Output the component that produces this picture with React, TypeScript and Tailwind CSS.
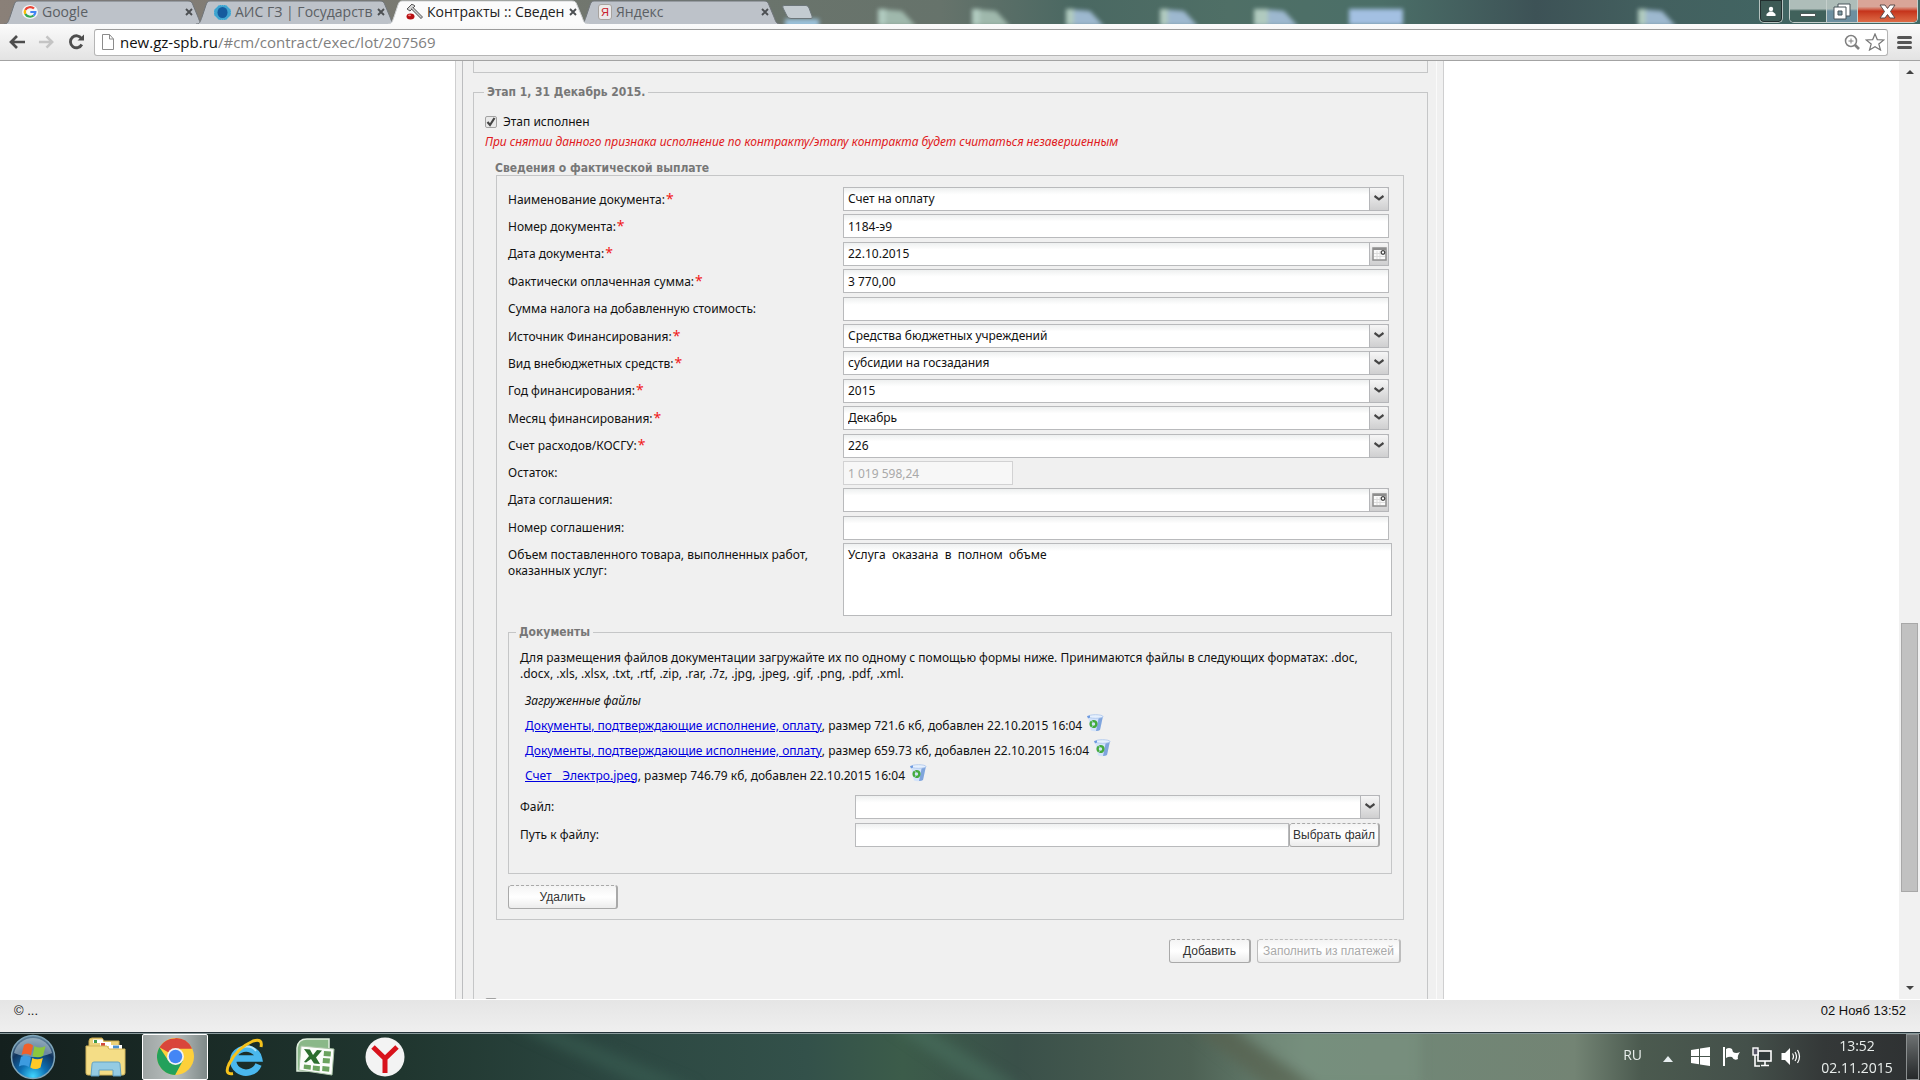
import React, { useId } from "react";

const UI = "font-['Noto_Sans',sans-serif]";
const HEADING = "font-['DejaVu_Sans_Condensed','DejaVu_Sans',sans-serif] text-[12px] font-bold text-[#777]";
const FIELD =
  "h-6 w-full border border-[#b9babc] bg-linear-to-b from-[#eef0f0] via-white via-30% to-white px-1 text-[12px] text-[#111] outline-none";

type TabProps = { title: string; icon: React.ReactNode; active?: boolean };

function Tab({ title, icon, active }: TabProps) {
  return (
    <div className="relative flex h-6 w-48 shrink-0 items-center pr-[5px] pl-3.5">
      <svg
        className={active ? "absolute inset-0 z-10 h-full w-full overflow-visible" : "absolute inset-0 h-full w-full overflow-visible"}
        viewBox="0 0 192 24"
        preserveAspectRatio="none"
        aria-hidden="true"
      >
        <path
          d="M-4 24 C0 24 0 22 2 17 L6 5 C7 2 8 1 10 1 L180 1 C183 1 184 2 185 5 L190 17 C192 22 192 24 197 24"
          fill={active ? "#fbfbfb" : "#bdc2c9"}
          stroke={active ? "#cfd2d4" : "#70757a"}
        />
      </svg>
      <button type="button" className="relative z-10 flex min-w-0 flex-1 items-center gap-1 text-left">
        {icon}
        <span className={active ? "text-[14px] leading-5 whitespace-nowrap text-[#222]" : "text-[14px] leading-5 whitespace-nowrap text-[#5b5f64]"}>
          {title}
        </span>
      </button>
      <button type="button" aria-label="Закрыть вкладку" className="relative z-10 flex w-3 justify-center">
        <svg width="8" height="8" viewBox="0 0 8 8" aria-hidden="true">
          <path d="M1 1 L7 7 M7 1 L1 7" stroke="#4c4f52" strokeWidth="1.9" />
        </svg>
      </button>
    </div>
  );
}

const GoogleIcon = () => (
  <svg className="shrink-0" width="16" height="14" viewBox="0 0 48 48" preserveAspectRatio="none" aria-hidden="true">
    <circle cx="24" cy="24" r="24" fill="#f4f5f6" />
    <path d="M36 12 A16 16 0 0 0 10 17" fill="none" stroke="#ea4335" strokeWidth="7" />
    <path d="M10 17 A16 16 0 0 0 10 31" fill="none" stroke="#fbbc05" strokeWidth="7" />
    <path d="M10 31 A16 16 0 0 0 35 36" fill="none" stroke="#34a853" strokeWidth="7" />
    <path d="M35 36 A16 16 0 0 0 40 24 H25" fill="none" stroke="#4285f4" strokeWidth="7" />
  </svg>
);

const GearIcon = () => (
  <svg className="shrink-0" width="17" height="15" viewBox="0 0 17 15" aria-hidden="true">
    <path d="M5 0 L12 0 L17 5 L17 10 L12 15 L5 15 L0 10 L0 5 Z" fill="#3fa4cf" strokeDasharray="1 1" stroke="#79bfe0" />
    <ellipse cx="8.5" cy="7.5" rx="5" ry="5.5" fill="#155b9e" />
  </svg>
);

const GavelIcon = () => (
  <svg className="shrink-0" width="17" height="16" viewBox="0 0 17 16" aria-hidden="true">
    <path d="M1 5 L6 0 L9 2 L4 7 Z" fill="#d4d4d4" stroke="#555" />
    <path d="M6 4 L16 14" stroke="#555" strokeWidth="3" />
    <path d="M6 4 L15.500 13.500" stroke="#cfcfcf" strokeWidth="1.400" />
    <ellipse cx="4.500" cy="12.500" rx="4" ry="3" fill="#b80f12" />
    <ellipse cx="3.500" cy="11.300" rx="1.500" ry="0.900" fill="#ef8a86" />
  </svg>
);

const YandexIcon = () => (
  <span className="flex h-4 w-3.5 shrink-0 items-center justify-center rounded-[3px] border border-[#a7a39f] bg-[#eceaea] font-['Liberation_Sans',sans-serif] text-[11px] text-[#c8202a]">
    Я
  </span>
);

function Header() {
  return (
    <header className="shrink-0 font-['Open_Sans',sans-serif]">
      <div className="relative flex h-6 overflow-hidden">
        <svg className="absolute inset-0 h-full w-full" viewBox="0 0 1920 24" preserveAspectRatio="none" aria-hidden="true">
          <defs>
            <linearGradient id="glass" x1="0" x2="1">
              <stop offset="0" stopColor="#8a8078" />
              <stop offset="0.380" stopColor="#6b746c" />
              <stop offset="0.490" stopColor="#66736b" />
              <stop offset="0.560" stopColor="#4a6862" />
              <stop offset="0.640" stopColor="#4f6f66" />
              <stop offset="0.720" stopColor="#4b6f68" />
              <stop offset="0.800" stopColor="#3d5256" />
              <stop offset="0.860" stopColor="#43605f" />
              <stop offset="1" stopColor="#3f6a66" />
            </linearGradient>
          </defs>
          <rect width="1920" height="24" fill="url(#glass)" />
          <g className="blur-[2px]">
            {[818, 912, 1006, 1100, 1194, 1288, 1638].map((x, i) => (
              <g key={x} transform={i < 5 ? "translate(60 0)" : i === 5 ? "translate(-28 0)" : undefined}>
                <path d={`M${x} 9 L${x + 24} 11 L${x + 38} 26 L${x} 26Z`} fill={i < 2 ? "#9fb8ac" : "#9db8cf"} />
                <rect x={x} y="9" width="8" height="16" fill="#b0cabf" />
              </g>
            ))}
            <rect x="1349" y="9" width="54" height="16" fill="#a3c0e2" />
            <rect x="785" y="19" width="34" height="8" fill="#9cc3dd" />
          </g>
        </svg>
        <div className="relative flex w-full pl-2">
          <Tab title="Google" icon={<GoogleIcon />} />
          <Tab title="АИС ГЗ | Государств" icon={<GearIcon />} />
          <Tab title="Контракты :: Сведен" icon={<GavelIcon />} active />
          <Tab title="Яндекс" icon={<YandexIcon />} />
          <button type="button" aria-label="Новая вкладка" className="ml-1.5 flex items-center">
            <svg width="32" height="16" viewBox="0 0 32 16" aria-hidden="true">
              <path d="M2 1.500 H24 Q26 1.500 27 4 L30 12 Q31 14.500 29 14.500 H9 Q6 14.500 5 12 L1 4 Q0 1.500 2 1.500Z" fill="#c3cbd0" stroke="#6c7679" />
            </svg>
          </button>
          <div className="ml-auto flex items-start pr-0.5">
            <button type="button" aria-label="Профиль" className="mr-1.5 flex h-[23px] w-6 items-center justify-center rounded-b-[5px] border border-t-0 border-[#b5c2bf] bg-[#3d5a55] shadow-[inset_0_0_0_1px_#222e2e]">
              <svg width="10" height="11" viewBox="0 0 10 11" fill="#fff" aria-hidden="true">
                <circle cx="5" cy="3" r="2.200" />
                <path d="M0.500 10 V8 L3.500 5.500 H6.500 L9.500 8 V10Z" />
              </svg>
            </button>
            <div className="flex h-[23px] overflow-hidden rounded-b-[5px] border border-t-0 border-[#c5cfcc] shadow-[inset_0_0_0_1px_#222e2e]">
              <button type="button" aria-label="Свернуть" className="flex w-9 items-center justify-center bg-linear-to-b from-[#aebdb9] from-40% to-[#40615b] to-50%">
                <span className="mt-2 h-1 w-4 border border-[#4d5a58] bg-white" />
              </button>
              <button type="button" aria-label="Восстановить" className="flex w-8 items-center justify-center border-x border-[#c5cfcc] bg-linear-to-b from-[#aebdb9] from-40% to-[#6c8fa0] to-50%">
                <svg width="18" height="17" viewBox="0 0 18 17" aria-hidden="true">
                  <path d="M5 1 H17 V13 H5Z" fill="#fff" stroke="#48545a" />
                  <path d="M1 4 H13 V16 H1Z" fill="#fff" stroke="#48545a" />
                  <path d="M5 8 H9 V12 H5Z" fill="#7f9ba6" stroke="#48545a" />
                </svg>
              </button>
              <button type="button" aria-label="Закрыть" className="flex w-[59px] items-center justify-center bg-linear-to-b from-[#d9a598] from-30% via-[#c5321a] via-50% to-[#dd6a45]">
                <svg width="17" height="15" viewBox="0 0 17 15" aria-hidden="true">
                  <path d="M1 1 H6 L8.500 4.500 L11 1 H16 L11.500 7.500 L16 14 H11 L8.500 10.500 L6 14 H1 L5.500 7.500Z" fill="#fff" stroke="#5b4a4a" />
                </svg>
              </button>
            </div>
          </div>
        </div>
      </div>
      <div className="flex h-[37px] items-center border-b border-[#a3a3a3] bg-linear-to-b from-[#fbfbfb] to-[#e3e3e3] pr-2 pl-2">
        <button type="button" aria-label="Назад" className="flex w-[30px] items-center">
          <svg width="18" height="14" viewBox="0 0 18 14" fill="none" stroke="#4d4d4d" strokeWidth="2.700" aria-hidden="true">
            <path d="M17 7 H3 M9 1 L3 7 L9 13" />
          </svg>
        </button>
        <button type="button" aria-label="Вперёд" className="flex w-[30px] items-center">
          <svg width="17" height="14" viewBox="0 0 18 14" fill="none" stroke="#c4c4c4" strokeWidth="2.700" aria-hidden="true">
            <path d="M1 7 H15 M9 1 L15 7 L9 13" />
          </svg>
        </button>
        <button type="button" aria-label="Обновить" className="flex w-[26px] items-center">
          <svg width="17" height="16" viewBox="0 0 17 16" aria-hidden="true">
            <path d="M13.500 4.500 A6 6 0 1 0 13.800 10.500" fill="none" stroke="#4d4d4d" strokeWidth="2.800" />
            <path d="M9.500 6.500 H16 V0.500Z" fill="#4d4d4d" />
          </svg>
        </button>
        <div className="flex h-[27px] min-w-0 flex-1 items-center rounded-[3px] border border-[#b5b5b5] border-t-[#9c9c9c] bg-white pr-0.5 pl-1.5">
          <svg className="shrink-0" width="14" height="16" viewBox="0 0 14 16" aria-hidden="true">
            <path d="M1.500 0.500 H8.500 L12.500 5 V15.500 H1.500Z M8.500 0.500 V5 H12.500" fill="#fff" stroke="#8b8b8b" />
          </svg>
          <a href="#cm/contract/exec/lot/207569" className="ml-[5px] flex-1 text-[15px] leading-5 text-[#808080]">
            <span className="text-[#111]">new.gz-spb.ru</span>/#cm/contract/exec/lot/207569
          </a>
          <svg className="shrink-0" width="17" height="16" viewBox="0 0 17 16" fill="none" stroke="#808080" aria-hidden="true">
            <circle cx="7" cy="7" r="5.500" strokeWidth="1.500" />
            <path d="M4.500 7 H9.500 M7 4.500 V9.500" />
            <path d="M11 11 L15 15" strokeWidth="2.600" />
          </svg>
          <svg className="ml-1 shrink-0" width="20" height="18" viewBox="0 0 20 18" aria-hidden="true">
            <path d="M10 1 L12.300 6.600 L18.800 7 L13.800 11 L15.500 17 L10 13.700 L4.500 17 L6.200 11 L1.200 7 L7.700 6.600Z" fill="#fff" stroke="#777" strokeWidth="1.200" />
          </svg>
        </div>
        <button type="button" aria-label="Меню" className="ml-[9px] flex w-[15px] flex-col gap-0.5">
          <span className="h-[3px] w-full rounded-xs bg-[#555]" />
          <span className="h-[3px] w-full rounded-xs bg-[#555]" />
          <span className="h-[3px] w-full rounded-xs bg-[#555]" />
        </button>
      </div>
    </header>
  );
}

function Trigger({ kind }: { kind: "select" | "date" }) {
  return (
    <span className="pointer-events-none absolute top-0 right-0 flex h-6 w-5 items-center justify-center rounded-tr-xs border border-[#b5b6b9] bg-linear-to-b from-[#f6f6f6] to-[#cfcfd0]">
      {kind === "select" ? (
        <svg className="mb-0.5" width="10" height="6" viewBox="0 0 10 6" fill="none" aria-hidden="true">
          <path d="M0.500 1 L5 4.300 L9.500 1" stroke="#454545" strokeWidth="2.200" />
        </svg>
      ) : (
        <svg width="15" height="14" viewBox="0 0 15 14" aria-hidden="true">
          <rect x="1" y="1" width="13" height="12" fill="#fafafa" stroke="#8d8d8d" strokeWidth="1.500" />
          <path d="M1 2 H14" stroke="#8d8d8d" strokeWidth="2" />
          <path d="M2 6.500 H13 M2 9.500 H13 M5 4 V12 M8 4 V12" stroke="#dcdcdc" />
          <circle cx="11" cy="5.500" r="1.800" fill="#fff" stroke="#444" strokeWidth="1.300" />
        </svg>
      )}
    </span>
  );
}

type RowData = {
  label: string;
  required?: boolean;
  kind?: "text" | "select" | "date" | "disabled";
  value?: string;
};

const rows: RowData[] = [
  { label: "Наименование документа:", required: true, kind: "select", value: "Счет на оплату" },
  { label: "Номер документа:", required: true, value: "1184-э9" },
  { label: "Дата документа:", required: true, kind: "date", value: "22.10.2015" },
  { label: "Фактически оплаченная сумма:", required: true, value: "3 770,00" },
  { label: "Сумма налога на добавленную стоимость:" },
  { label: "Источник Финансирования:", required: true, kind: "select", value: "Средства бюджетных учреждений" },
  { label: "Вид внебюджетных средств:", required: true, kind: "select", value: "субсидии на госзадания" },
  { label: "Год финансирования:", required: true, kind: "select", value: "2015" },
  { label: "Месяц финансирования:", required: true, kind: "select", value: "Декабрь" },
  { label: "Счет расходов/КОСГУ:", required: true, kind: "select", value: "226" },
  { label: "Остаток:", kind: "disabled", value: "1 019 598,24" },
  { label: "Дата соглашения:", kind: "date" },
  { label: "Номер соглашения:" },
];

function Row({ label, required, kind = "text", value = "" }: RowData) {
  const id = useId();
  return (
    <div className="flex h-6 items-center">
      <label htmlFor={id} className="w-[335px] shrink-0 leading-4">
        {label}
        {required && <span className="ml-px text-[14px] leading-4 text-[#f01818]">*</span>}
      </label>
      <div className="relative flex-1">
        {kind === "select" && (
          <select id={id} defaultValue={value} className={`${FIELD} block appearance-none`}>
            <option>{value}</option>
          </select>
        )}
        {(kind === "text" || kind === "date") && <input id={id} type="text" defaultValue={value} className={`${FIELD} block`} />}
        {kind === "disabled" && (
          <input
            id={id}
            type="text"
            disabled
            defaultValue={value}
            className="block h-6 w-[170px] border border-[#d2d2d3] bg-[#f7f7f7] px-1 text-[12px] text-[#a9a9a9]"
          />
        )}
        {(kind === "select" || kind === "date") && <Trigger kind={kind} />}
      </div>
    </div>
  );
}

function Push({ children, className, disabled }: { children: React.ReactNode; className: string; disabled?: boolean }) {
  return (
    <button
      type="button"
      disabled={disabled}
      className={`${className} h-6 shrink-0 rounded-[3px] border border-r-2 border-[#a9a9a9] bg-linear-to-b from-[#f4f4f4] via-white to-[#ececec] font-['Liberation_Sans',sans-serif] text-[12px] whitespace-nowrap text-[#333] [border-top-style:dashed] disabled:border-[#bdbdbd] disabled:text-[#a9a9a9]`}
    >
      {children}
    </button>
  );
}

const TrashIcon = () => (
  <svg width="18" height="18" viewBox="0 0 18 18" aria-hidden="true">
    <path d="M2 2.500 L17 2 L14 16 Q10 18 5 16.500Z" fill="#d3e3fa" />
    <path d="M13 2.200 L17 2 L14 16 Q12 17.200 10 17Z" fill="#7fa4dc" />
    <ellipse cx="9.500" cy="2.500" rx="7.500" ry="1.800" fill="#e6f0fd" stroke="#a9c4ec" strokeWidth="0.800" />
    <path d="M1 2 L4 1.500 L4 3.500 L2 4.500Z" fill="#6f9be0" />
    <circle cx="7.500" cy="10" r="2.900" fill="none" stroke="#43ab3c" strokeWidth="2.400" strokeDasharray="5.500 0.600" />
  </svg>
);

const files = [
  { name: "Документы, подтверждающие исполнение, оплату", size: "721.6" },
  { name: "Документы, подтверждающие исполнение, оплату", size: "659.73" },
  { name: "Счет__Электро.jpeg", size: "746.79" },
];

function Documents() {
  return (
    <fieldset className="mt-2 min-w-0 border border-[#c5c6c7] pr-[11px] pb-[26px] pl-[11px]">
      <legend className={`${HEADING} -ml-1 px-[3px] leading-4`}>Документы</legend>
      <p className="mt-2.5 leading-4">
        Для размещения файлов документации загружайте их по одному с помощью формы ниже. Принимаются файлы в следующих форматах: .doc, .docx,
        .xls, .xlsx, .txt, .rtf, .zip, .rar, .7z, .jpg, .jpeg, .gif, .png, .pdf, .xml.
      </p>
      <div className="mt-[11px] pl-[5px]">
        <h4 className="mb-1 leading-4 italic">Загруженные файлы</h4>
        <ul>
          {files.map((f) => (
            <li key={f.size} className="flex h-[25px] items-center whitespace-pre">
              <a href="#file" className="text-[#0000e0] underline">
                {f.name}
              </a>
              , размер {f.size} кб, добавлен 22.10.2015 16:04
              <button type="button" aria-label="Удалить файл" className="mb-1.5 ml-1">
                <TrashIcon />
              </button>
            </li>
          ))}
        </ul>
      </div>
      <div className="mt-[7px]">
        <Row label="Файл:" kind="select" />
      </div>
      <div className="mt-1 flex h-6 items-center">
        <label htmlFor="path" className="w-[335px] shrink-0">
          Путь к файлу:
        </label>
        <input id="path" type="text" className={`${FIELD} min-w-0 flex-1`} />
        <Push className="w-[91px]">Выбрать файл</Push>
      </div>
    </fieldset>
  );
}

function Payment() {
  return (
    <section className="mr-[23px] ml-[22px]">
      <h3 className={`${HEADING} -ml-px leading-[13px]`}>Сведения о фактической выплате</h3>
      <div className="border border-[#c5c6c7] pt-[11px] pr-[11px] pb-2.5 pl-[11px]">
        <div className="mr-[3px] flex h-[353px] flex-col justify-between">
          {rows.map((r) => (
            <Row key={r.label} {...r} />
          ))}
        </div>
        <div className="mt-[3px] flex">
          <label htmlFor="volume" className="w-[335px] shrink-0 pt-1 leading-4">
            Объем поставленного товара, выполненных работ,
            <br />
            оказанных услуг:
          </label>
          <textarea
            id="volume"
            defaultValue="Услуга  оказана  в  полном  объме"
            className="h-[73px] flex-1 resize-none border border-[#b9babc] bg-linear-to-b from-[#eef0f0] via-white via-10% to-white px-1 py-[3px] text-[12px] leading-4 outline-none"
          />
        </div>
        <Documents />
        <Push className="mt-[11px] w-[110px]">Удалить</Push>
      </div>
    </section>
  );
}

function Check({ label }: { label?: string }) {
  return (
    <label className="flex h-4 items-center gap-1.5 pl-[11px]">
      <span className="relative flex h-3 w-3 items-center justify-center">
        <input
          type="checkbox"
          aria-label={label ? undefined : "Следующий этап"}
          defaultChecked={Boolean(label)}
          className="peer h-3 w-3 appearance-none rounded-xs border border-[#a2a2a2] bg-[#e9e9e9]"
        />
        <svg className="pointer-events-none absolute inset-0 hidden peer-checked:block" width="12" height="12" viewBox="0 0 12 12" aria-hidden="true">
          <path d="M2.500 6 L5 9 L9.500 2" fill="none" stroke="#444" strokeWidth="2.200" />
        </svg>
      </span>
      {label}
    </label>
  );
}

function Content() {
  return (
    <main className="flex min-h-0 flex-1 bg-white">
      <div className={`${UI} min-w-0 flex-1 overflow-hidden text-[12px] text-[#111]`}>
        <div className="mx-auto max-w-[989px] border-x border-[#cfcfd0] bg-[#f0f0f0] px-1.5">
          <div className="border-x border-x-[#fafafa] border-l-[#bcbdbf] pr-2 pl-2.5">
            <div className="h-3 border border-t-0 border-[#c5c6c7]" />
            <fieldset className="mt-[11px] min-w-0 border border-[#c5c6c7]">
              <legend className={`${HEADING} ml-2.5 px-[3px] leading-4`}>Этап 1, 31 Декабрь 2015.</legend>
              <div className="mt-3.5 mb-3">
                <Check label="Этап исполнен" />
                <p className="mt-1 pl-[11px] leading-4 text-[#e01b22] italic">
                  При снятии данного признака исполнение по контракту/этапу контракта будет считаться незавершенным
                </p>
              </div>
              <Payment />
              <div className="mt-[19px] mr-[26px] mb-[33px] flex justify-end gap-1.5">
                <Push className="w-[82px]">Добавить</Push>
                <Push className="w-36" disabled>
                  Заполнить из платежей
                </Push>
              </div>
              <Check />
            </fieldset>
          </div>
        </div>
      </div>
      <div className="flex w-[21px] shrink-0 flex-col items-center bg-[#f1f1f1]">
        <div className="flex flex-col items-center py-[9px]">
          <span className="border-x-4 border-b-4 border-transparent border-b-[#444]" />
        </div>
        <div className="flex w-full flex-1 flex-col">
          <div className="grow-[541]" />
          <div className="mx-auto w-[17px] grow-[268] border border-[#a8a8a8] bg-[#c1c1c1]" />
          <div className="grow-[85]" />
        </div>
        <div className="flex flex-col items-center py-[9px]">
          <span className="border-x-4 border-t-4 border-transparent border-t-[#444]" />
        </div>
      </div>
    </main>
  );
}

const StartIcon = () => (
  <svg width="46" height="46" viewBox="0 0 46 46" aria-hidden="true">
    <defs>
      <radialGradient id="orb" cx="50%" cy="95%" r="90%">
        <stop offset="0" stopColor="#3fd6ff" />
        <stop offset="0.350" stopColor="#0d6fb3" />
        <stop offset="0.700" stopColor="#12355e" />
        <stop offset="1" stopColor="#5b7d96" />
      </radialGradient>
    </defs>
    <circle cx="23" cy="23" r="21.500" fill="url(#orb)" stroke="#7fa6ba" strokeWidth="1.500" />
    <path d="M4 19 A19.500 19.500 0 0 1 42 19 Q23 27 4 19Z" fill="#c7dbe6" opacity="0.500" />
    <path d="M14 11 Q19 8 23 11.500 L21 21.500 Q16.500 18.500 11.500 21Z" fill="#f0602a" />
    <path d="M24.500 12 Q29 15 35.500 12 L33 22 Q28 24.500 22.500 22Z" fill="#8cc63f" />
    <path d="M11 22.800 Q16 20.500 21 23.500 L19 33 Q14.500 30 8.800 32.500Z" fill="#3c9be0" />
    <path d="M22.300 24 Q27 26.500 32.800 24 L30.500 33.500 Q25.500 36.500 20.300 33.500Z" fill="#ffc928" />
  </svg>
);

const FolderIcon = () => (
  <svg width="42" height="40" viewBox="0 0 42 40" aria-hidden="true">
    <path d="M4 4 Q4 1 7 1 H17 L19 4 H34 V12 H4Z" fill="#ecd27a" stroke="#c9a94e" />
    <path d="M8 2.500 H18 V6 H8Z" fill="#fff" />
    <path d="M15 5 H26 V9 H15Z" fill="#fff" />
    <path d="M24 8 H37 V12 H24Z" fill="#fff" />
    <path d="M9 3 h3 v3 h-3Z" fill="#3f9a4d" />
    <path d="M16 6 h4 v3 h-4Z" fill="#d24b3f" />
    <path d="M28 8.500 h6 v3 h-6Z" fill="#4a91cf" />
    <path d="M1 9 H22 L24 12 H40 V36 Q40 38 38 38 H3 Q1 38 1 36Z" fill="#f4dd86" stroke="#d2b65d" />
    <path d="M6 39 L7 27 Q7 25 9 25 H33 Q35 25 35 27 L36 39 H28 V33 H14 V39Z" fill="#8fcbe9" stroke="#5d9fc6" opacity="0.950" />
  </svg>
);

const ChromeIcon = () => (
  <svg width="37" height="37" viewBox="0 0 48 48" aria-hidden="true">
    <circle cx="24" cy="24" r="24" fill="#fdd03b" />
    <path d="M24 24 L3.200 12 A24 24 0 0 1 44.800 13.500 L24 13.500Z" fill="#d9453b" />
    <path d="M24 0 A24 24 0 0 1 45.500 13.500 H24Z" fill="#d9453b" />
    <path d="M3.200 12 A24 24 0 0 0 23.500 48 L33.500 29.500 L24 24 L14.800 29.500Z" fill="#23a15b" />
    <circle cx="24" cy="24" r="11" fill="#f2f2f2" />
    <circle cx="24" cy="24" r="8.700" fill="#4386f5" />
  </svg>
);

const IeIcon = () => (
  <svg width="40" height="38" viewBox="0 0 40 38" aria-hidden="true">
    <path d="M33.500 26.500 A13 12 0 1 1 34 20.500 H11" fill="none" stroke="#4ab8ee" strokeWidth="6.500" />
    <path d="M12 14 Q15 8.500 22 8.500 Q28 8.500 31 13" fill="none" stroke="#b5e6fb" strokeWidth="1.800" />
    <path d="M8 35.500 Q-1 37 4 26 Q12 10 28 3 Q38 0 36 9" fill="none" stroke="#f5c21c" strokeWidth="3" />
  </svg>
);

const ExcelIcon = () => (
  <svg width="40" height="38" viewBox="0 0 40 38" aria-hidden="true">
    <path d="M2 33 V10 Q3 1 12 1 H34 V33Z" fill="#8ab889" stroke="#dfeede" strokeWidth="1.500" />
    <path d="M6 8 L39 11 L37 37 L4 32Z" fill="#fbfdfb" stroke="#a9c4a6" />
    <path d="M9 11 L15 11.500 L18 17 L22 12 L27 12.500 L21 19.500 L25 26 L19 25.500 L16 21 L11 24.500 L9 24 L14 18Z" fill="#2c6e2f" />
    <path d="M29 13 l7 .6 -.4 5 -7 -.6Z M28 20 l7 .6 -.4 5 -7 -.6Z M27.500 28 l7 .8 -.4 5 -7 -.8Z M18 27.500 l7 .7 -.4 5 -7 -.9Z M9 26.500 l7 .7 -.4 4.500 -7 -.9Z" fill="#6ba35f" />
  </svg>
);

const YandexBrowserIcon = () => (
  <svg width="40" height="40" viewBox="0 0 40 40" aria-hidden="true">
    <circle cx="20" cy="20" r="19.500" fill="#f3f3f3" />
    <path d="M8 10 L20 21.500 L32 10 M20 20 V36" fill="none" stroke="#d8121b" strokeWidth="5" />
  </svg>
);

function Taskbar() {
  return (
    <nav className="relative flex h-12 shrink-0 items-center border-t border-[#26343a] bg-[#8a9a9c] font-['Open_Sans',sans-serif] text-[#e9eeec]">
      <svg className="absolute inset-x-0 top-px h-[46px] w-full" viewBox="0 0 1920 45" preserveAspectRatio="none" aria-hidden="true">
        <defs>
          <linearGradient id="aurora" x1="0" x2="1">
            <stop offset="0" stopColor="#14201e" />
            <stop offset="0.210" stopColor="#20362f" />
            <stop offset="0.320" stopColor="#2c4741" />
            <stop offset="0.420" stopColor="#33514a" />
            <stop offset="0.470" stopColor="#3c5c4a" />
            <stop offset="0.530" stopColor="#3a5049" />
            <stop offset="0.620" stopColor="#4d6154" />
            <stop offset="0.680" stopColor="#6f8877" />
            <stop offset="0.820" stopColor="#738474" />
            <stop offset="0.855" stopColor="#4b5a4f" />
            <stop offset="0.910" stopColor="#44504a" />
            <stop offset="0.950" stopColor="#343838" />
            <stop offset="1" stopColor="#2e3132" />
          </linearGradient>
        </defs>
        <rect width="1920" height="45" fill="url(#aurora)" />
        <g className="blur-[6px]">
          <path d="M510 -9 H545 L700 54 H650Z" fill="#3b5f54" opacity="0.600" />
          <path d="M890 -9 H920 L1025 54 H985Z" fill="#49705f" opacity="0.600" />
          <path d="M1190 -9 H1225 L1320 54 H1270Z" fill="#596350" opacity="0.700" />
          <path d="M1230 -9 H1420 V54 H1320Z" fill="#7d9683" opacity="0.500" />
        </g>
      </svg>
      <div className="relative flex h-full flex-1 items-center">
        <button type="button" aria-label="Пуск" className="ml-2.5 flex w-[46px] justify-center"><StartIcon /></button>
        <button type="button" aria-label="Проводник" className="ml-2.5 flex w-20 justify-center"><FolderIcon /></button>
        <button type="button" aria-label="Google Chrome" className="mr-1 -ml-1 flex h-[46px] w-[66px] items-center justify-center rounded-xs border border-white bg-linear-to-r from-[#9ea5a4] via-[#b9bfbe] to-[#7e8988]"><ChromeIcon /></button>
        <button type="button" aria-label="Internet Explorer" className="flex w-[66px] justify-center"><IeIcon /></button>
        <button type="button" aria-label="Microsoft Excel" className="ml-1 flex w-[66px] justify-center"><ExcelIcon /></button>
        <button type="button" aria-label="Яндекс.Браузер" className="ml-0.5 flex w-[70px] justify-center"><YandexBrowserIcon /></button>
      </div>
      <div className="relative flex h-full items-center">
        <span className="mr-[21px] mb-1 text-[14px]">RU</span>
        <svg className="mt-1 mr-[18px]" width="10" height="6" viewBox="0 0 10 6" aria-hidden="true">
          <path d="M5 0 L10 6 H0Z" fill="#e8eef0" />
        </svg>
        <svg className="mr-3" width="19" height="19" viewBox="0 0 19 19" fill="#fff" aria-hidden="true">
          <path d="M0 3 L8 1.800 V9 H0Z M9 1.600 L19 0 V9 H9Z M0 10 H8 V17.200 L0 16Z M9 10 H19 V19 L9 17.400Z" />
        </svg>
        <svg className="mr-[11px]" width="19" height="19" viewBox="0 0 19 19" fill="#fff" aria-hidden="true">
          <path d="M1 0 H3 V19 H1Z M4 2 Q7 0 10 2 L11 5 Q14 7 18 5 Q15 9 16 12 Q12 14 10 10 Q7 9 4 11Z" />
        </svg>
        <svg className="mr-[9px]" width="20" height="20" viewBox="0 0 20 20" fill="none" stroke="#fff" aria-hidden="true">
          <rect x="6" y="4" width="13" height="10" strokeWidth="1.600" fill="#2f3a3a" />
          <path d="M9 18.500 H17 M13 14 V18 M3 8 V19 H8" strokeWidth="1.600" />
          <rect x="1" y="1" width="5" height="7" fill="#556" strokeWidth="1.400" />
        </svg>
        <svg width="20" height="19" viewBox="0 0 20 19" fill="none" stroke="#fff" aria-hidden="true">
          <path d="M0.500 6 H4 L9 1 V18 L4 13 H0.500Z" fill="#fff" stroke="none" />
          <path d="M11.500 6.500 Q13.500 9.500 11.500 12.500 M14 5 Q17 9.500 14 14 M16.500 3 Q20.500 9.500 16.500 16" strokeWidth="1.200" />
        </svg>
        <div className="ml-5 w-[72px] text-center text-[14px] leading-[22px]">
          <div>13:52</div>
          <div>02.11.2015</div>
        </div>
        <button type="button" aria-label="Свернуть все окна" className="mr-px ml-[13px] h-[46px] w-[13px] border border-[#8b8f90] bg-linear-to-b from-[#6e7273] to-[#26292a]" />
      </div>
    </nav>
  );
}

export default function App() {
  return (
    <div className="flex h-screen flex-col overflow-hidden bg-white">
      <Header />
      <Content />
      <footer className="flex h-[33px] shrink-0 justify-between border-t border-white bg-linear-to-b from-[#e5e5e5] to-[#efefef] px-3.5 pt-[3px] font-['Liberation_Sans',sans-serif] text-[13px] leading-4 text-[#111]">
        <span>© ...</span>
        <span>02 Нояб 13:52</span>
      </footer>
      <Taskbar />
    </div>
  );
}
